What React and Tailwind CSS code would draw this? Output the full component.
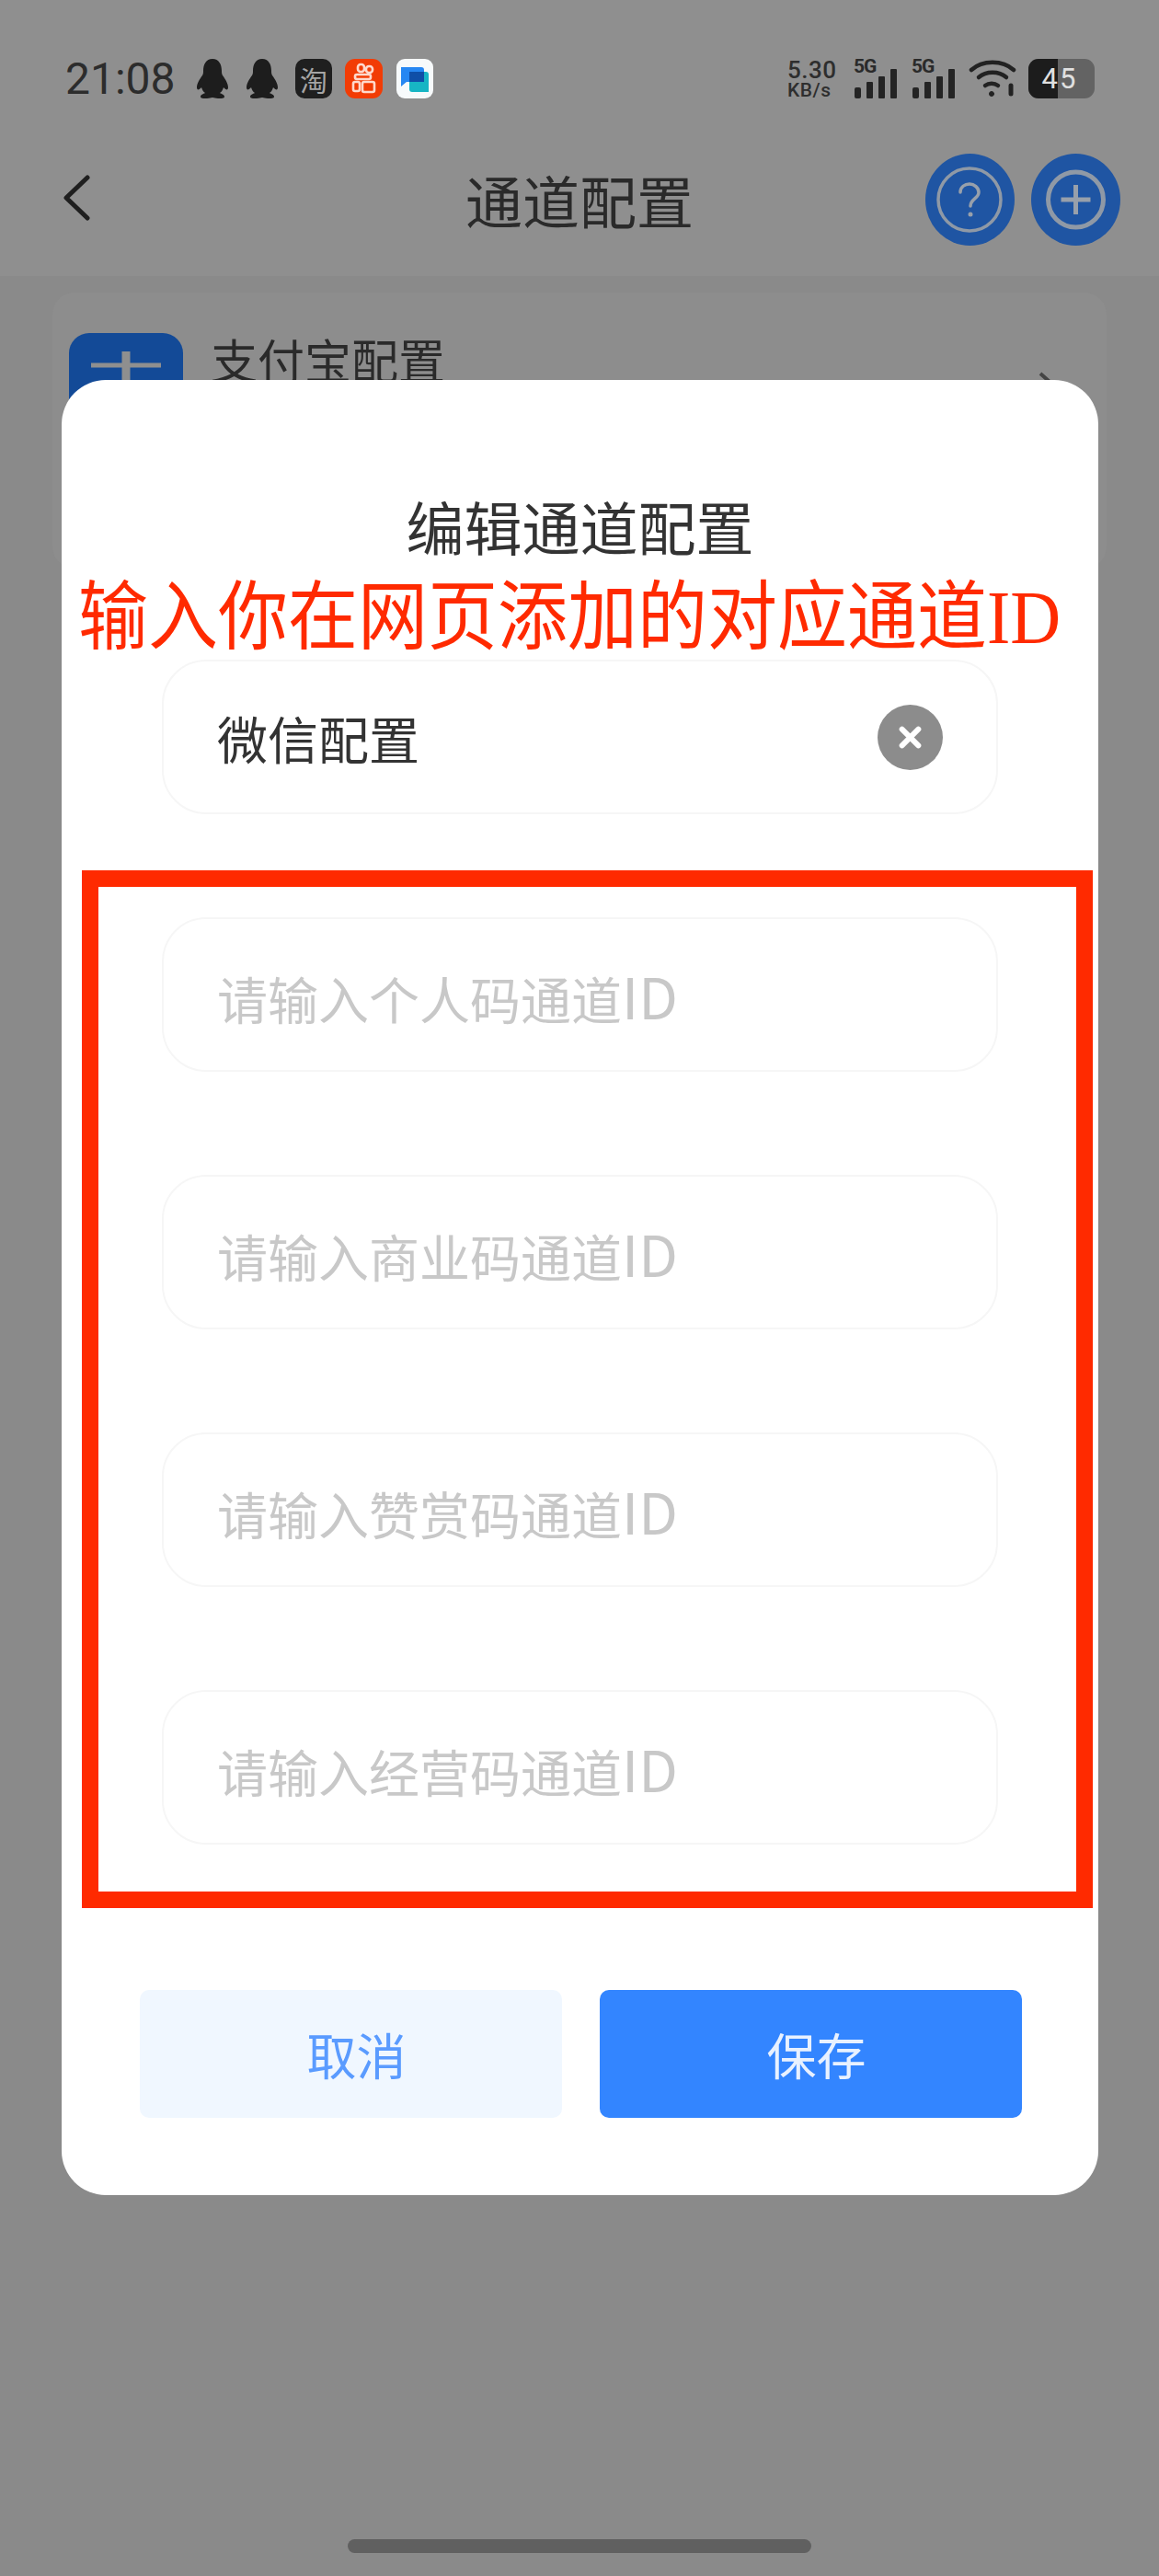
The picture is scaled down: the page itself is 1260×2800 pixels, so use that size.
import React from 'react';

const cjk = "font-['Noto_Sans_CJK_SC','Noto_Sans',sans-serif]";

const Penguin = () => (
  <svg width="36" height="43" viewBox="0 0 36 43" fill="#1d1d1d">
    <path d="M18 0c7 0 10 6 10 13 0 2 0 3 1 5 3 4 6 9 6 13 0 3-2 3-4 1l-1-1c-1 3-2 5-4 6 2 1 5 2 5 4 0 2-3 2-7 2-3 0-4-1-6-1s-3 1-6 1c-4 0-7 0-7-2 0-2 3-3 5-4-2-1-3-3-4-6l-1 1c-2 2-4 2-4-1 0-4 3-9 6-13 1-2 1-3 1-5C8 6 11 0 18 0z" />
  </svg>
);

const Signal = () => (
  <div className="relative w-[50px] h-[43px]">
    <span className="absolute left-0 top-[-4px] text-[21px] leading-[24px] font-bold tracking-[-1px] text-[#2a2a2a] font-['Roboto',sans-serif]">5G</span>
    <svg className="absolute left-0 top-0" width="50" height="43" viewBox="0 0 50 43" fill="#242424">
      <rect x="1" y="31" width="7" height="12" rx="2" />
      <rect x="14" y="25" width="7" height="18" rx="1" />
      <rect x="27" y="19" width="7" height="24" rx="1" />
      <rect x="40" y="11" width="7" height="32" rx="1" />
    </svg>
  </div>
);

const StatusBar = () => (
  <div className="flex items-center justify-between h-[43px] pl-[71px] pr-[70px]">
    <div className="flex items-center">
      <span className="w-[119px] text-[48px] leading-[43px] text-[#2c2c2c] font-['Roboto',sans-serif]">21:08</span>
      <div className="flex items-center gap-[18px] ml-[23px]">
        <Penguin />
        <Penguin />
        <div className="w-[40px] h-[43px] rounded-[10px] bg-[#1f1f1f] flex items-center justify-center text-[30px] leading-none text-[#a5a5a5] font-['Noto_Sans_CJK_SC',sans-serif]">淘</div>
      </div>
      <svg className="ml-[14px]" width="41" height="43" viewBox="0 0 41 43">
        <rect width="41" height="43" rx="11" fill="#f23c05" />
        <g fill="none" stroke="#ffd9cc" strokeWidth="2.6">
          <rect x="14" y="6" width="7" height="8" rx="3" />
          <rect x="23" y="8" width="7" height="7" rx="3" />
          <rect x="11" y="17" width="17" height="5" rx="2" />
          <rect x="9" y="25" width="7" height="10" rx="2" />
          <rect x="19" y="25" width="13" height="11" rx="2" />
        </g>
      </svg>
      <svg className="ml-[15px]" width="40" height="43" viewBox="0 0 40 43">
        <rect width="40" height="43" rx="9" fill="#f7fafb" />
        <path d="M5 9h22c2 0 3 1 3 3v13H11l-6 5z" fill="#2687f2" />
        <path d="M14 14h18c2 0 3 1 3 3v19H17c-2 0-3-1-3-3z" fill="#17b5c4" />
        <rect x="14" y="14" width="16" height="11" fill="#0f4fa8" />
      </svg>
    </div>
    <div className="flex items-center">
      <div className="w-[54px] text-[#2e2e2e] font-['Roboto',sans-serif] font-medium">
        <div className="text-[26px] leading-[24px] tracking-[0.5px]">5.30</div>
        <div className="text-[21px] leading-[20px] tracking-[0.5px]">KB/s</div>
      </div>
      <div className="flex items-center gap-[13px] ml-[18px]">
        <Signal />
        <Signal />
      </div>
      <svg className="ml-[12px]" width="52" height="43" viewBox="0 0 52 43" fill="none" stroke="#222" strokeLinecap="round">
        <path d="M3 12C15 1 37 1 49 12" strokeWidth="4.5" />
        <path d="M11 20c8-7 22-7 30 0" strokeWidth="4.5" />
        <path d="M18 29c4-3 10-3 14 0" strokeWidth="4.5" />
        <circle cx="25" cy="38" r="2.5" fill="#222" strokeWidth="1" />
        <path d="M46 29v9" strokeWidth="5" />
      </svg>
      <div className="relative flex ml-[13px] w-[72px] h-[43px] rounded-[11px] overflow-hidden bg-[#636363]">
        <div className="w-[32px] h-full bg-[#1c1c1c]" />
        <span className="absolute inset-0 flex items-center justify-center pr-[4px] text-[31px] tracking-[2px] leading-none text-[#e0e0e0] font-['Roboto',sans-serif]">45</span>
      </div>
    </div>
  </div>
);

const HelpIcon = () => (
  <svg width="97" height="100" viewBox="0 0 97 100">
    <ellipse cx="48.5" cy="50" rx="48.5" ry="50" fill="#1f55a3" />
    <circle cx="48" cy="50" r="34" fill="none" stroke="#8f99a6" strokeWidth="3.5" />
    <path d="M38 42c0-6 5-9 10-9s10 4 10 9c0 7-9 7-9 15" fill="none" stroke="#98a0ab" strokeWidth="3.5" strokeLinecap="round" />
    <circle cx="49" cy="66" r="2.5" fill="#98a0ab" />
  </svg>
);

const PlusIcon = () => (
  <svg width="97" height="100" viewBox="0 0 97 100">
    <ellipse cx="48.5" cy="50" rx="48.5" ry="50" fill="#1f55a3" />
    <circle cx="48.5" cy="50" r="30" fill="none" stroke="#8f99a6" strokeWidth="5" />
    <path d="M48.5 34v32M32.5 50h32" fill="none" stroke="#98a0ab" strokeWidth="5" />
  </svg>
);

const Header = () => (
  <div className="bg-[#8f8f8f] h-[300px] pt-[64px]">
    <StatusBar />
    <div className="grid grid-cols-[1fr_auto_1fr] items-center h-[100px] mt-[60px] px-[42px]">
      <svg className="ml-[26px] -mt-[4px]" width="30" height="50" viewBox="0 0 30 50" fill="none" stroke="#1f1f1f" strokeWidth="5" strokeLinecap="round" strokeLinejoin="round">
        <path d="M27 3 4 25l23 22" />
      </svg>
      <h1 className={`text-[62px] leading-[100px] text-[#2a2a2a] ${cjk}`}>通道配置</h1>
      <div className="flex justify-end gap-[18px]">
        <HelpIcon />
        <PlusIcon />
      </div>
    </div>
  </div>
);

// sits behind the dialog, only the top of it shows
const ChannelCard = () => (
  <div className="mt-[18px] mx-[57px] h-[300px] rounded-[24px] bg-[#8d8d8d] pt-[44px] pl-[18px] pr-[60px] flex justify-between">
    <div className="flex gap-[30px]">
      <div className="w-[124px] h-[124px] rounded-[22px] bg-[#134a97] flex justify-center pt-[20px]">
        <svg width="78" height="60" viewBox="0 0 78 60" fill="none" stroke="#8f8f8f">
          <path d="M1 15h76" strokeWidth="5" />
          <path d="M39 0v60" strokeWidth="9" />
        </svg>
      </div>
      <span className={`text-[51px] leading-[56px] text-[#2a2a2a] ${cjk}`}>支付宝配置</span>
    </div>
    <svg className="mt-[42px]" width="14" height="20" viewBox="0 0 14 20" fill="none" stroke="#444" strokeWidth="4">
      <path d="m2 2 9 8-9 8" />
    </svg>
  </div>
);

const Field = ({ text, placeholder, clearable }) => (
  <div className={`h-[168px] rounded-[48px] border-2 border-[#f6f6f6] bg-white flex items-center justify-between pl-[58px] pr-[58px] text-[55px] ${cjk}`}>
    <span className={placeholder ? 'text-[#c8c8c8]' : 'text-[#333333]'}>
      {text || placeholder.replace('ID', '')}
      {placeholder && <span className="text-[62px]">ID</span>}
    </span>
    {clearable && (
      <svg width="71" height="71" viewBox="0 0 72 72">
        <circle cx="36" cy="36" r="36" fill="#8c8c8c" />
        <path d="m27 27 18 18M45 27 27 45" stroke="#fff" strokeWidth="6" strokeLinecap="round" />
      </svg>
    )}
  </div>
);

const Dialog = () => (
  <div className="absolute left-[67px] top-[413px] w-[1127px] h-[1973px] rounded-[48px] bg-white pt-[116px]">
    <h2 className={`text-center text-[63px] leading-[84px] text-[#333333] ${cjk}`}>编辑通道配置</h2>
    <div className="mt-[104px] mx-[109px] flex flex-col gap-[112px]">
      <Field text="微信配置" clearable />
      <Field placeholder="请输入个人码通道ID" />
      <Field placeholder="请输入商业码通道ID" />
      <Field placeholder="请输入赞赏码通道ID" />
      <Field placeholder="请输入经营码通道ID" />
    </div>
    <div className="mt-[158px] ml-[85px] mr-[83px] grid grid-cols-2 gap-[41px]">
      <button className={`h-[139px] rounded-[10px] bg-[#f0f7ff] pl-[12px] text-[54px] text-[#5a9bff] ${cjk}`}>取消</button>
      <button className={`h-[139px] rounded-[10px] bg-[#3385ff] pl-[12px] text-[54px] text-[#e8f1ff] ${cjk}`}>保存</button>
    </div>
  </div>
);

export default function App() {
  return (
    <div className="relative w-[1260px] h-[2800px] overflow-hidden bg-[#8a8a8a]">
      <Header />
      <ChannelCard />
      <Dialog />

      {/* red annotation drawn over the screenshot */}
      <div className="absolute left-[85px] top-[616px] text-[76px] leading-[110px] whitespace-nowrap scale-y-[1.08] text-[#ff2a00] font-['Liberation_Serif','Noto_Sans_CJK_SC',serif]">
        输入你在网页添加的对应通道ID
      </div>
      <div className="absolute left-[89px] top-[946px] w-[1099px] h-[1128px] border-[18px] border-[#ff2a00]" />

      <div className="absolute left-[378px] top-[2760px] w-[504px] h-[15px] rounded-full bg-[#606060]" />
    </div>
  );
}
